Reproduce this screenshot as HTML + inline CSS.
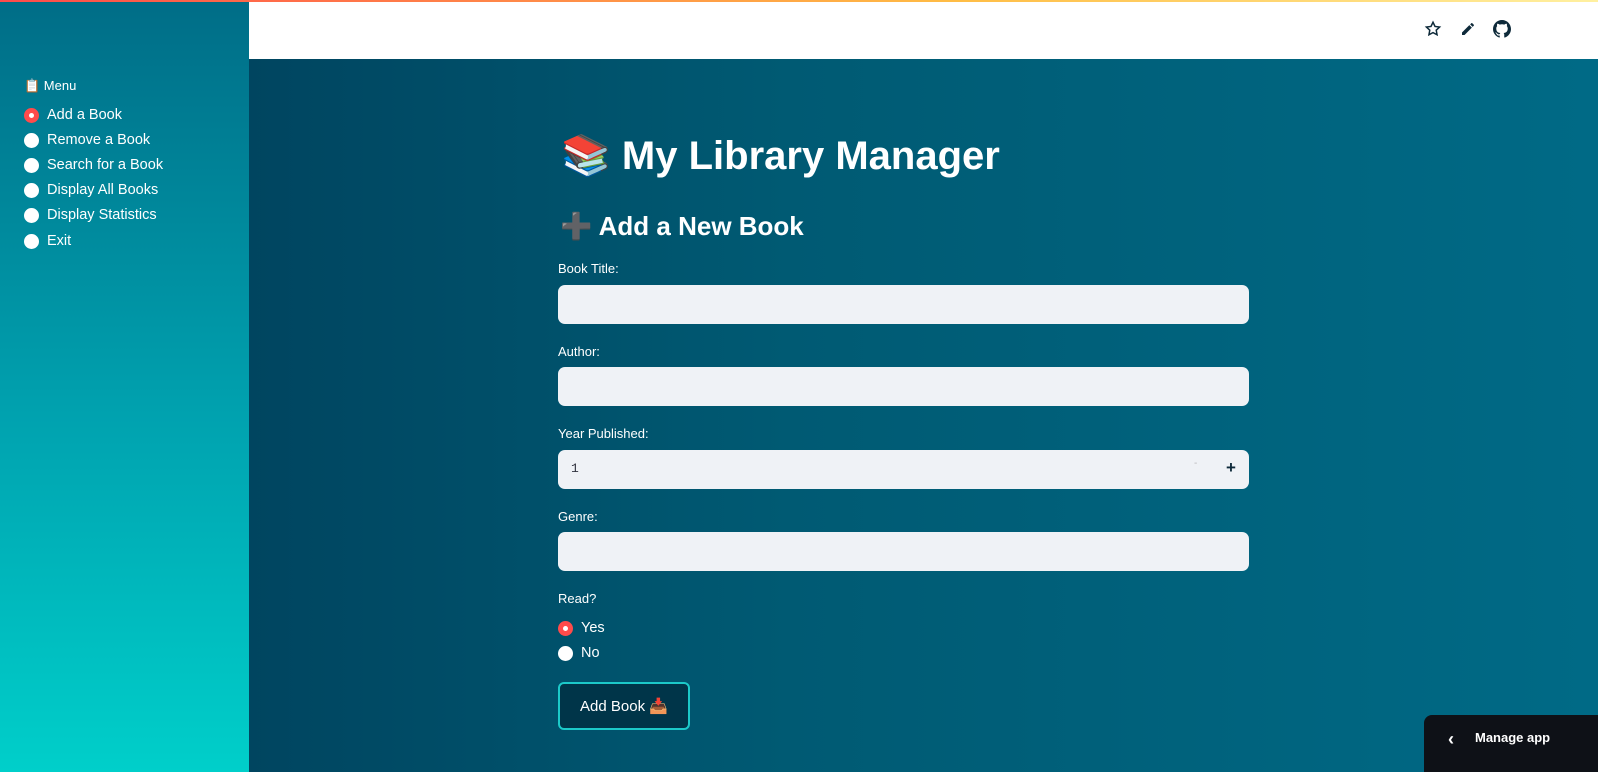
<!DOCTYPE html>
<html><head><meta charset="utf-8"><style>
*{box-sizing:border-box;margin:0;padding:0}
body{width:1598px;height:772px;overflow:hidden;font-family:"Liberation Sans","DejaVu Sans",sans-serif;position:relative;background:#00596f}
.topline{position:absolute;left:0;top:0;width:1598px;height:2px;background:linear-gradient(90deg,#ff4b4b,#ffbd45 60%,#fff0a0);z-index:5}
.side{position:absolute;left:0;top:0;width:249px;height:772px;background:linear-gradient(180deg,#006d87 0%,#00a3b0 55%,#00cfca 100%)}
.head{position:absolute;left:249px;top:0;width:1349px;height:59px;background:#fff}
.main{position:absolute;left:249px;top:59px;width:1349px;height:713px;background:linear-gradient(90deg,#004560 0%,#005a73 40%,#006a86 100%)}
.menu{position:absolute;left:24px;top:78px;color:#fff;font-size:13px}
.ri{position:absolute;display:flex;align-items:center;color:#fff;font-size:14.5px}
.dot{width:15px;height:15px;border-radius:50%;background:#fff;margin-right:8px}
.dot.on{background:#ff4b4b;display:flex;align-items:center;justify-content:center}
.dot.on::after{content:"";width:5px;height:5px;border-radius:50%;background:#fff}
.t{position:absolute;color:#fff;font-weight:bold}
.lbl{position:absolute;left:558px;color:#fff;font-size:13px}
.inp{position:absolute;left:558px;width:691px;height:39px;background:#eff2f6;border-radius:7px}
.btn{position:absolute;left:558px;top:682px;width:132px;height:48px;border:2px solid #1cc9c9;border-radius:6px;background:#003549;color:#fff;font-size:15px;display:flex;align-items:center;justify-content:center}
.manage{position:absolute;left:1424px;top:715px;width:174px;height:57px;background:#0e1117;border-radius:8px 0 0 0;color:#fff;font-size:13px;font-weight:bold}
</style></head><body>
<div class="topline"></div>
<div class="side"></div>
<div class="head">
<svg style="position:absolute;left:1175px;top:20px" width="18" height="18" viewBox="0 0 24 24" fill="none" stroke="#0e2a3a" stroke-width="2"><path d="M12 3l2.7 5.6 6.1.8-4.5 4.2 1.1 6.1L12 16.8 6.6 19.7l1.1-6.1L3.2 9.4l6.1-.8z"/></svg>
<svg style="position:absolute;left:1211px;top:21px" width="16" height="16" viewBox="0 0 24 24" fill="#0e2a3a"><path d="M3 17.2V21h3.8L17.8 10l-3.8-3.8zM20.7 7c.4-.4.4-1 0-1.4l-2.3-2.3c-.4-.4-1-.4-1.4 0l-1.8 1.8 3.8 3.8z"/></svg>
<svg style="position:absolute;left:1244px;top:20px" width="18" height="18" viewBox="0 0 16 16" fill="#0e2a3a"><path d="M8 0C3.6 0 0 3.6 0 8c0 3.5 2.3 6.5 5.5 7.6.4.1.5-.2.5-.4v-1.4c-2.2.5-2.700-1-2.7-1-.4-.9-.9-1.2-.9-1.2-.7-.5.1-.5.1-.5.8.1 1.200.8 1.2.8.7 1.200 1.900.9 2.300.7.1-.5.3-.9.5-1.1-1.8-.2-3.6-.9-3.6-4 0-.9.3-1.6.8-2.1-.1-.2-.4-1 .1-2.1 0 0 .7-.2 2.2.8.6-.2 1.300-.3 2-.3s1.4.1 2 .3c1.5-1 2.2-.8 2.2-.8.4 1.1.2 1.9.1 2.1.5.6.8 1.3.8 2.1 0 3.1-1.9 3.8-3.7 4 .3.3.6.8.6 1.5v2.2c0 .2.1.5.6.4C13.7 14.5 16 11.5 16 8c0-4.4-3.6-8-8-8z"/></svg>
</div>
<div class="main"></div>

<div class="menu">📋 Menu</div>
<div class="ri" style="left:24px;top:107px"><span class="dot on"></span>Add a Book</div>
<div class="ri" style="left:24px;top:132px"><span class="dot"></span>Remove a Book</div>
<div class="ri" style="left:24px;top:157px"><span class="dot"></span>Search for a Book</div>
<div class="ri" style="left:24px;top:182px"><span class="dot"></span>Display All Books</div>
<div class="ri" style="left:24px;top:207px"><span class="dot"></span>Display Statistics</div>
<div class="ri" style="left:24px;top:233px"><span class="dot"></span>Exit</div>

<div class="t" style="left:561px;top:133px;font-size:40px;line-height:46px">📚 My Library Manager</div>
<div class="t" style="left:560px;top:210px;font-size:26px;line-height:32px">➕ Add a New Book</div>

<div class="lbl" style="top:261px">Book Title:</div>
<div class="inp" style="top:285px"></div>
<div class="lbl" style="top:344px">Author:</div>
<div class="inp" style="top:367px"></div>
<div class="lbl" style="top:426px">Year Published:</div>
<div class="inp" style="top:450px"><span style="position:absolute;left:13px;top:11px;font-family:'Liberation Mono',monospace;font-size:13px;color:#31333f">1</span><span style="position:absolute;left:636px;top:8px;font-size:10px;color:#bbb">-</span><span style="position:absolute;left:668px;top:8px;font-size:17px;font-weight:bold;color:#0e2a3a">+</span></div>
<div class="lbl" style="top:509px">Genre:</div>
<div class="inp" style="top:532px"></div>
<div class="lbl" style="top:591px">Read?</div>
<div class="ri" style="left:558px;top:620px"><span class="dot on"></span>Yes</div>
<div class="ri" style="left:558px;top:645px"><span class="dot"></span>No</div>
<div class="btn">Add Book 📥</div>

<div class="manage"><span style="position:absolute;left:24px;top:14px;font-size:18px">‹</span><span style="position:absolute;left:51px;top:15px">Manage app</span></div>
</body></html>
